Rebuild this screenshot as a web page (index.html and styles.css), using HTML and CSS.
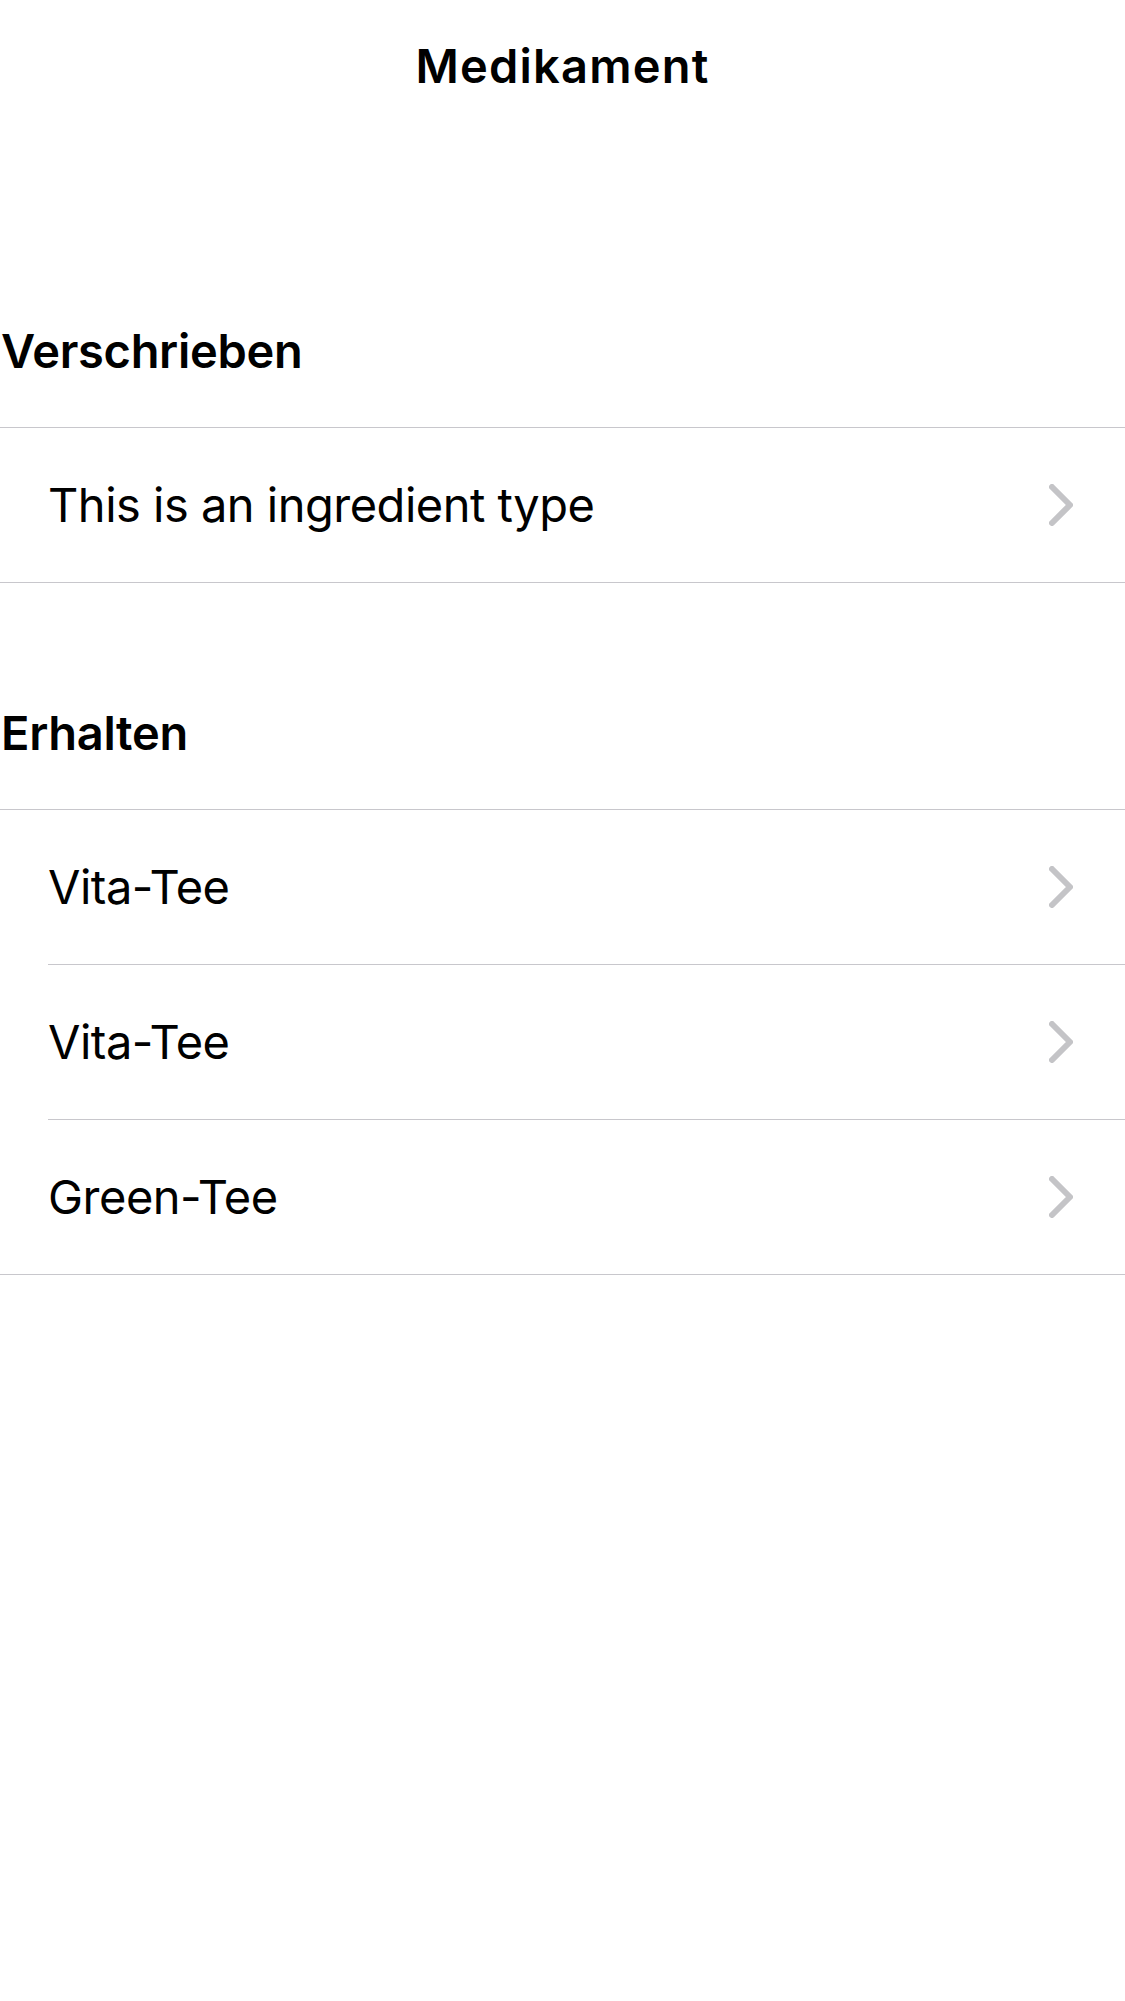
FILE: index.html
```html
<!DOCTYPE html>
<html lang="de">
<head>
<meta charset="utf-8">
<title>Medikament</title>
<link rel="stylesheet" href="styles.css">
</head>
<body>
<div class="screen">
  <header class="navbar"><h1 class="nav-title">Medikament</h1></header>

  <section class="section first">
    <h2 class="section-header">Verschrieben</h2>
    <div class="list">
      <div class="row"><span class="row-label">This is an ingredient type</span>
        <svg class="chevron" viewBox="0 0 24 42" width="24" height="42"><polyline points="3,3 21,21 3,39"/></svg>
      </div>
    </div>
  </section>

  <section class="section">
    <h2 class="section-header">Erhalten</h2>
    <div class="list">
      <div class="row"><span class="row-label">Vita-Tee</span>
        <svg class="chevron" viewBox="0 0 24 42" width="24" height="42"><polyline points="3,3 21,21 3,39"/></svg>
      </div>
      <div class="sep"></div>
      <div class="row"><span class="row-label">Vita-Tee</span>
        <svg class="chevron" viewBox="0 0 24 42" width="24" height="42"><polyline points="3,3 21,21 3,39"/></svg>
      </div>
      <div class="sep"></div>
      <div class="row"><span class="row-label">Green-Tee</span>
        <svg class="chevron" viewBox="0 0 24 42" width="24" height="42"><polyline points="3,3 21,21 3,39"/></svg>
      </div>
    </div>
  </section>
</div>
</body>
</html>
```

FILE: styles.css
```css
html, body {
  margin: 0;
  padding: 0;
  background: #ffffff;
}

body {
  font-family: Inter, "Noto Sans", "Liberation Sans", sans-serif;
  color: #000000;
  width: 1125px;
  min-height: 2001px;
}

.navbar {
  height: 132px;
  display: flex;
  justify-content: center;
}

.nav-title {
  margin: 0;
  font-size: 47px;
  font-weight: 600;
  line-height: 132px;
  letter-spacing: 1.2px;
}

.section.first {
  margin-top: 69px;
}

.section-header {
  margin: 0;
  padding: 122px 0 48px 1px;
  font-size: 47px;
  font-weight: 600;
  line-height: 56px;
  letter-spacing: -0.3px;
}

.list {
  border-top: 1px solid #c8c7cc;
  border-bottom: 1px solid #c8c7cc;
}

.row {
  height: 154px;
  display: flex;
  align-items: center;
  justify-content: space-between;
  padding: 0 52px 0 48px;
}

.row-label {
  font-size: 47px;
  font-weight: 400;
  line-height: 56px;
  letter-spacing: -0.5px;
}

.sep {
  height: 1px;
  margin-left: 48px;
  background: #c8c7cc;
}

.chevron {
  display: block;
  fill: none;
  stroke: #c4c4c7;
  stroke-width: 6;
  stroke-linecap: round;
  stroke-linejoin: round;
}
```
